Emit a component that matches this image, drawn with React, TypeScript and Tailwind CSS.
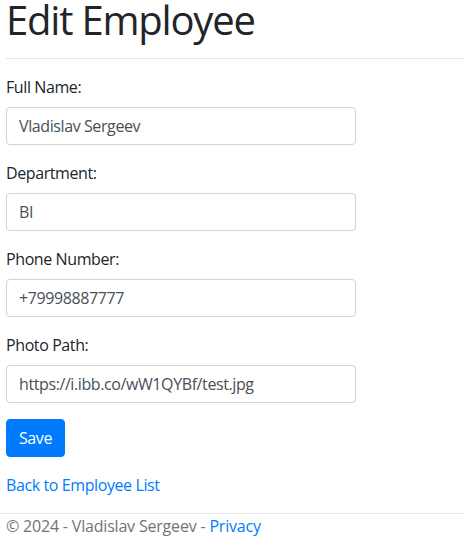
import React from "react";

const fields = [
  { label: "Full Name:", value: "Vladislav Sergeev" },
  { label: "Department:", value: "BI" },
  { label: "Phone Number:", value: "+79998887777" },
  { label: "Photo Path:", value: "https://i.ibb.co/wW1QYBf/test.jpg" },
];

export default function App() {
  return (
    <div className="font-['Open_Sans',sans-serif] tracking-[-0.025em] text-[16px] leading-[24px] text-[#212529] bg-white min-h-[559px]">
      <div className="pl-[6px]">
        <h1 className="text-[40px] leading-[39px] font-normal tracking-[-0.03em]">Edit Employee</h1>
        <hr className="mt-[19px] mb-4 border-0 border-t border-[#e6e6e6]" />
        <form onSubmit={(e) => e.preventDefault()}>
          {fields.map((f) => (
            <div key={f.label} className="mb-4">
              <label className="block mb-2">{f.label}</label>
              <input
                readOnly
                defaultValue={f.value}
                className="block w-[350px] h-[38px] px-3 py-[6px] border border-[#ced4da] rounded text-[#495057] bg-white outline-none tracking-[-0.025em]"
              />
            </div>
          ))}
          <div className="mb-4">
            <button
              type="submit"
              className="bg-[#007bff] border border-[#007bff] text-white rounded h-[38px] px-3 py-[6px] leading-[24px] tracking-[-0.025em]"
            >
              Save
            </button>
          </div>
        </form>
        <div className="mb-4">
          <a href="#" className="text-[#007bff] no-underline">
            Back to Employee List
          </a>
        </div>
      </div>
      <footer className="border-t border-[#e6e6e6] pl-[6px] text-[#6c757d] tracking-[-0.012em]">
        © 2024 - Vladislav Sergeev -{" "}
        <a href="#" className="text-[#007bff]">
          Privacy
        </a>
      </footer>
    </div>
  );
}
